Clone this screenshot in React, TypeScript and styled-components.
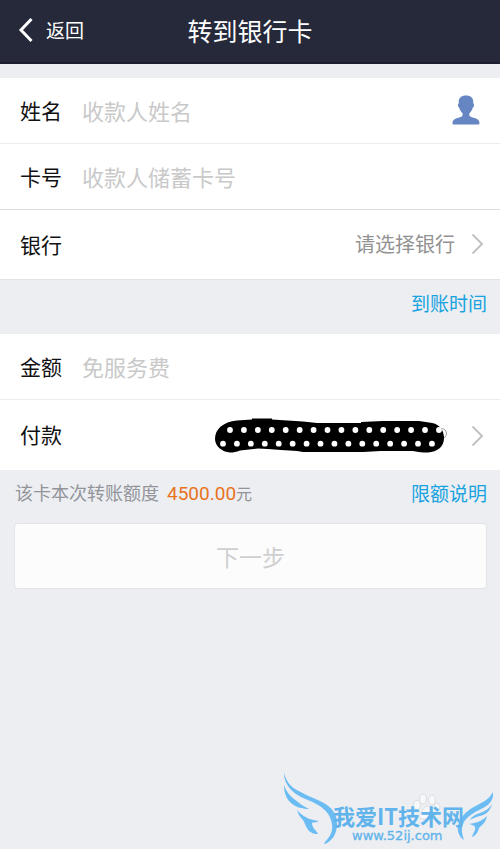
import React from "react";
import styled, { createGlobalStyle } from "styled-components";

const GlobalStyle = createGlobalStyle`
  *, *::before, *::after { box-sizing: border-box; }
  html, body, #root { min-height: 100%; }
  html { height: 100%; }
  body {
    margin: 0;
    background: #eceef2;
    font-family: "Noto Sans CJK SC", sans-serif;
    color: #111;
  }
  button, input, select { font: inherit; color: inherit; }
`;

const Screen = styled.div`
  display: flex;
  flex-direction: column;
  min-height: 100vh;
  background: #eceef2;
`;

const Header = styled.header`
  display: grid;
  grid-template-columns: 1fr auto 1fr;
  align-items: center;
  height: 64px;
  padding: 0 16px 2px;
  background: #25293a;
  border-bottom: 2px solid #1d1f30;
  color: #fff;
`;

const BackButton = styled.button`
  display: flex;
  align-items: center;
  justify-self: start;
  gap: 12px;
  padding: 0;
  border: 0;
  background: none;
  font-size: 19px;
  line-height: 28px;
`;

const Title = styled.h1`
  margin: 0;
  font-size: 25px;
  line-height: 36px;
  font-weight: 400;
`;

const Form = styled.form`
  display: flex;
  flex-direction: column;
  padding-top: 14px;
`;

const Group = styled.div`
  background: #fff;
`;

const Row = styled.div<{ $line?: string; $tall?: boolean }>`
  display: flex;
  align-items: center;
  height: ${(p) => (p.$tall ? 70 : 66)}px;
  padding: 0 16px 2px 20px;
  border-bottom: ${(p) => (p.$line ? `1px solid ${p.$line}` : "0")};
`;

const Label = styled.label`
  flex: 0 0 62px;
  font-size: 21px;
  line-height: 30px;
`;

const TextField = styled.input`
  flex: 1;
  min-width: 0;
  padding: 0;
  border: 0;
  outline: 0;
  background: none;
  font-size: 22px;
  line-height: 32px;
  &::placeholder { color: #c9c9c9; opacity: 1; }
`;

const IconButton = styled.button`
  display: flex;
  padding: 0;
  margin-right: 4px;
  border: 0;
  background: none;
`;

const BankSelect = styled.select`
  flex: 1;
  min-width: 0;
  padding: 0;
  margin-right: 16px;
  border: 0;
  outline: 0;
  appearance: none;
  background: none;
  color: #929292;
  font-size: 20px;
  line-height: 30px;
  text-align: right;
  text-align-last: right;
`;

const PayButton = styled.button`
  display: flex;
  flex: 1;
  align-items: center;
  justify-content: flex-end;
  gap: 24px;
  padding: 4px 0 0;
  border: 0;
  background: none;
`;

const Note = styled.div<{ $tall?: boolean }>`
  display: flex;
  align-items: center;
  justify-content: ${(p) => (p.$tall ? "flex-end" : "space-between")};
  height: ${(p) => (p.$tall ? 54 : 45)}px;
  padding: ${(p) => (p.$tall ? "0 13px 8px" : "0 13px 0 15px")};
`;

const LinkText = styled.a`
  color: #18a3e0;
  font-size: 19px;
  line-height: 28px;
  text-decoration: none;
`;

const Quota = styled.p`
  margin: 0;
  color: #929499;
  font-size: 18px;
  line-height: 28px;
`;

const Amount = styled.strong`
  margin-left: 8px;
  color: #e8731c;
  font-family: Roboto, sans-serif;
  font-size: 19px;
  font-weight: 400;
`;

const Unit = styled.span`
  font-size: 16px;
`;

const NextButton = styled.button`
  height: 66px;
  margin: 8px 13px 0 14px;
  padding: 0;
  border: 1px solid #e3e4e7;
  border-radius: 4px;
  background: #fcfcfc;
  color: #cfcfcf;
  font-size: 23px;
  line-height: 34px;
`;

const Footer = styled.footer`
  display: flex;
  justify-content: flex-end;
  margin-top: auto;
  padding-right: 4px;
`;

const BackIcon = () => (
  <svg width="18" height="26" viewBox="0 0 18 26" fill="none" aria-hidden="true">
    <path d="M15.500 2 5 13l10.500 11" stroke="#fff" strokeWidth="3" />
  </svg>
);

const ChevronIcon = () => (
  <svg width="13" height="22" viewBox="0 0 13 22" fill="none" aria-hidden="true">
    <path d="M1.500 1.500 11 11 1.500 20.500" stroke="#c2c2c2" strokeWidth="2" />
  </svg>
);

const PersonIcon = () => (
  <svg width="28" height="30" viewBox="0 0 28 30" aria-hidden="true">
    <path
      fill="#6586c2"
      d="M14 .5c4.800 0 7.300 2.600 7.300 6.500v1.500c1.200.4.900 3.300-.4 4-.8 2.600-2 4.200-3.200 5.500-.5.600-.5 1.600-.3 2.300.5 1.400 2 2 4 2.500 3.600.8 6.100 2.200 6.100 5.500 0 .8-.5 1.200-1.300 1.200H1.800C1 29.500.5 29.100.5 28.300c0-3.300 2.500-4.700 6.100-5.500 2-.5 3.500-1.100 4-2.500.2-.7.200-1.700-.3-2.300-1.200-1.300-2.400-2.900-3.200-5.500-1.300-.7-1.600-3.600-.4-4V7C6.700 3.100 9.200.5 14 .5Z"
    />
  </svg>
);

const dots = Array.from({ length: 16 }, (_, i) => i * 13.93);

const HiddenAccount = () => (
  <svg width="232" height="36" viewBox="0 0 232 36" role="img" aria-label="付款账户">
    <circle cx="226.500" cy="15.500" r="5" fill="#fff" stroke="#999" />
    <path d="M0 21C0 11 8 4 22 2.500L37 1.500V.5H57V1.500L88 3.500 102 5H146V4L168 3H204L214 4.500C223 5 229 11 229 20 229 29 222 34 213 34.500 207 34.500 204 34 198 33H166L148 34H88L82 33 66 32 53 31 43 30.500 25 32.500C21 34 19 34.500 15 34.500 7 34 0 28 0 21Z" />
    <g fill="#fff">
      {dots.map((x) => <circle key={x} cx={x + 15} cy="12" r="2.900" />)}
      {dots.map((x) => <circle key={x} cx={x + 8} cy="25.700" r="2.900" />)}
    </g>
  </svg>
);

const SiteMark = () => (
  <svg width="214" height="78" viewBox="0 0 214 78" role="img" aria-label="我爱IT技术网 www.52ij.com">
    <g fill="#f7f8fa" stroke="#dcdee2" strokeWidth="1">
      <ellipse cx="135" cy="34" rx="3.500" ry="4.500" />
      <ellipse cx="141" cy="28" rx="3.500" ry="5" />
      <ellipse cx="150" cy="29" rx="3.500" ry="5" />
      <ellipse cx="155" cy="36" rx="3" ry="4" />
      <path d="M145 35c-3 0-3 4-6 6-4 4-1 8 6 7 7 1 10-3 6-7-3-2-3-6-6-6Z" />
    </g>
    <g fill="#6bbcf3">
      <path d="M2 2C4 9 7 14 13 18 21 23 32 27 40 31 50 36 55 43 55 53 55 63 50 70 43 73 42 73 42 72 43 71 48 66 51 60 50 54 49 44 43 38 36 34 30 30 25 29 19 26 8 20 2 12 2 2Z" />
      <path d="M2 14C4 20 7 24 12 28 17 32 21 35 27 38 20 38 13 36 8 31 4 27 2 21 2 14Z" />
      <path d="M15 39C21 46 28 49 37 50 34 52 31 51 30 52 30 57 34 59 36 63 31 63 27 61 25 57 23 54 23 52 21 49 18 46 16 43 15 39Z" />
      <path d="M211 21C212 30 206 35 199 38 191 42 184 46 181 53 179 58 180 63 182 69 177 66 175 60 176 55 178 46 184 41 190 37 199 32 207 29 211 21Z" />
      <path d="M210 33C208 41 203 44 198 45 194 46 191 47 188 49 190 45 194 43 198 42 203 40 207 38 210 33Z" />
      <path d="M205 45C200 50 195 52 187 53 190 54 192 54 193 56 194 59 191 62 190 66 195 64 196 60 197 57 200 54 204 51 205 45Z" />
    </g>
    <g fill="#61b3eb">
      <text x="51" y="54" fontFamily="Noto Sans CJK SC, sans-serif" fontSize="22" fontWeight="700">我爱IT技术网</text>
      <text x="70" y="69" fontFamily="DejaVu Sans, sans-serif" fontSize="13" stroke="#61b3eb" strokeWidth=".3">www.52ij.com</text>
    </g>
  </svg>
);

export default function App() {
  return (
    <Screen>
      <GlobalStyle />
      <Header>
        <BackButton type="button">
          <BackIcon />
          返回
        </BackButton>
        <Title>转到银行卡</Title>
      </Header>
      <Form onSubmit={(e) => e.preventDefault()}>
        <Group>
          <Row $line="#ececec">
            <Label htmlFor="name">姓名</Label>
            <TextField id="name" placeholder="收款人姓名" />
            <IconButton type="button" aria-label="选择联系人">
              <PersonIcon />
            </IconButton>
          </Row>
          <Row $line="#dcdcdc">
            <Label htmlFor="card">卡号</Label>
            <TextField id="card" inputMode="numeric" placeholder="收款人储蓄卡号" />
          </Row>
          <Row $tall $line="#e4e4e6">
            <Label htmlFor="bank">银行</Label>
            <BankSelect id="bank" defaultValue="">
              <option value="">请选择银行</option>
            </BankSelect>
            <ChevronIcon />
          </Row>
        </Group>
        <Note $tall>
          <LinkText href="#arrival">到账时间</LinkText>
        </Note>
        <Group>
          <Row $line="#ececec">
            <Label htmlFor="amount">金额</Label>
            <TextField id="amount" inputMode="decimal" placeholder="免服务费" />
          </Row>
          <Row $tall>
            <Label htmlFor="payment">付款</Label>
            <PayButton id="payment" type="button">
              <HiddenAccount />
              <ChevronIcon />
            </PayButton>
          </Row>
        </Group>
        <Note>
          <Quota>
            该卡本次转账额度
            <Amount>4500.00</Amount>
            <Unit>元</Unit>
          </Quota>
          <LinkText href="#limit">限额说明</LinkText>
        </Note>
        <NextButton type="submit" disabled>下一步</NextButton>
      </Form>
      <Footer>
        <SiteMark />
      </Footer>
    </Screen>
  );
}
